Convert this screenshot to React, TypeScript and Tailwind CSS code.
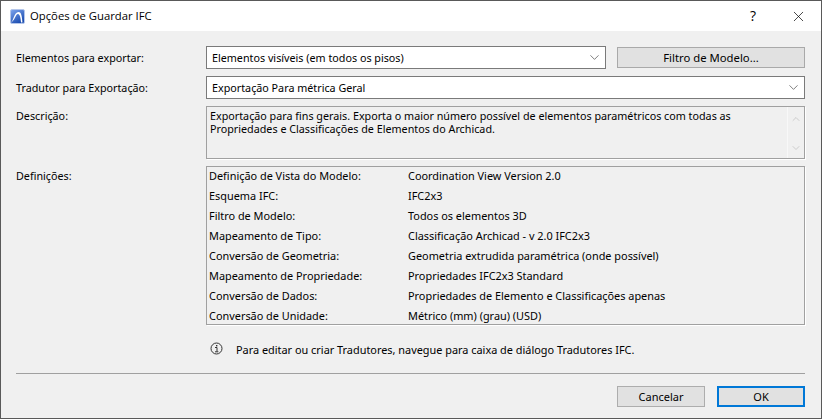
import { ChevronDown, ChevronUp, X } from 'lucide-react';

const settings = [
  ['Definição de Vista do Modelo:', 'Coordination View Version 2.0'],
  ['Esquema IFC:', 'IFC2x3'],
  ['Filtro de Modelo:', 'Todos os elementos 3D'],
  ['Mapeamento de Tipo:', 'Classificação Archicad - v 2.0 IFC2x3'],
  ['Conversão de Geometria:', 'Geometria extrudida paramétrica (onde possível)'],
  ['Mapeamento de Propriedade:', 'Propriedades IFC2x3 Standard'],
  ['Conversão de Dados:', 'Propriedades de Elemento e Classificações apenas'],
  ['Conversão de Unidade:', 'Métrico (mm) (grau) (USD)'],
];

function Select({ value, className }: { value: string; className: string }) {
  return (
    <div className={`flex h-[23px] items-center justify-between border border-[#7a7a7a] bg-white pl-[5px] pr-[3px] ${className}`}>
      <span>{value}</span>
      <ChevronDown size={15} strokeWidth={1} className="text-[#333]" />
    </div>
  );
}

function Logo() {
  return (
    <svg width="15" height="15" viewBox="0 0 15 15">
      <defs>
        <linearGradient id="logoFill" x1="0" y1="0" x2="0.6" y2="1">
          <stop offset="0" stopColor="#7fa6ee" />
          <stop offset="1" stopColor="#1b4cb0" />
        </linearGradient>
      </defs>
      <rect x="0.5" y="0.5" width="14" height="14" rx="1.5" fill="url(#logoFill)" stroke="#b4c6ea" />
      <path d="M1 13.5 C 3.5 12 4 3 8.5 3 C 11.5 3 12 8 12.5 13.5 L 11 13.5 C 10.7 9 9.8 5 8 5 C 5.5 5 5 11.5 1 13.5 Z" fill="#fff" />
    </svg>
  );
}

export default function App() {
  return (
    <div className="flex h-[419px] w-[822px] flex-col overflow-hidden border-x border-b border-t border-[#595959] bg-[#f0f0f0] font-['Noto_Sans',sans-serif] text-[10.75px] leading-[14px] text-black">
      <div className="flex h-[30px] shrink-0 items-center bg-white pl-[9px]">
        <Logo />
        <span className="ml-[5px] flex-1 font-['Open_Sans',sans-serif] text-[11.3px]">Opções de Guardar IFC</span>
        <span className="mr-[34px] font-['Open_Sans',sans-serif] text-[14px]">?</span>
        <X size={17} strokeWidth={1} className="mr-[14px]" />
      </div>
      <div className="flex flex-1 flex-col pl-[15px] pr-[16px] pt-[15px]">
        <div className="flex items-center">
          <span className="w-[190px] shrink-0">Elementos para exportar:</span>
          <Select value="Elementos visíveis (em todos os pisos)" className="w-[400px]" />
          <button className="ml-[11px] h-[21px] flex-1 border border-[#a9a9a9] bg-[#e1e1e1] text-[11.3px]">Filtro de Modelo...</button>
        </div>
        <div className="mt-[7px] flex items-center">
          <span className="w-[190px] shrink-0">Tradutor para Exportação:</span>
          <Select value="Exportação Para métrica Geral" className="flex-1" />
        </div>
        <div className="mt-[7px] flex">
          <span className="w-[190px] shrink-0 pt-[3px]">Descrição:</span>
          <div className="flex h-[53px] flex-1 border border-[#a0a0a0] shadow-[1px_1px_0_#fff]">
            <p className="flex-1 pl-[3px] pt-[3px] text-[10.75px] leading-[13px]">
              Exportação para fins gerais. Exporta o maior número possível de elementos paramétricos com todas as
              <br />
              Propriedades e Classificações de Elementos do Archicad.
            </p>
            <div className="flex w-[17px] flex-col items-center justify-between border-l border-[#f8f8f8] pb-[4px] pt-[6px] text-[#c0c0c0]">
              <ChevronUp size={12} strokeWidth={1.5} />
              <ChevronDown size={12} strokeWidth={1.5} />
            </div>
          </div>
        </div>
        <div className="mt-[7px] flex">
          <span className="w-[190px] shrink-0 pt-[3px]">Definições:</span>
          <div className="h-[159px] flex-1 border border-[#a0a0a0] pl-[2px] text-[10.9px] shadow-[1px_1px_0_#fff]">
            <div className="-mt-px">
              {settings.map(([label, value]) => (
                <div key={label} className="flex h-[20px] items-center">
                  <span className="w-[199px] shrink-0">{label}</span>
                  <span>{value}</span>
                </div>
              ))}
            </div>
          </div>
        </div>
        <div className="mt-[17px] flex items-center pl-[194px] text-[10.9px]">
          <svg width="13" height="13" viewBox="0 0 13 13" className="mb-[3px] shrink-0 text-[#333]">
            <circle cx="6.5" cy="6.5" r="5.5" fill="none" stroke="currentColor" />
            <rect x="6" y="3" width="1.4" height="1.4" fill="currentColor" />
            <path d="M5 5.5 H7 V9.5 M5 9.8 H8.4" fill="none" stroke="currentColor" />
          </svg>
          <span className="ml-[13px]">Para editar ou criar Tradutores, navegue para caixa de diálogo Tradutores IFC.</span>
        </div>
        <div className="mt-[15px] h-px bg-[#a0a0a0]" />
        <div className="mt-[12px] flex justify-end gap-[12px]">
          <button className="h-[21px] w-[88px] border border-[#adadad] bg-[#e1e1e1] text-[11px]">Cancelar</button>
          <button className="h-[21px] w-[88px] border-2 border-[#0078d7] bg-[#e1e1e1] text-[11px]">OK</button>
        </div>
      </div>
    </div>
  );
}
